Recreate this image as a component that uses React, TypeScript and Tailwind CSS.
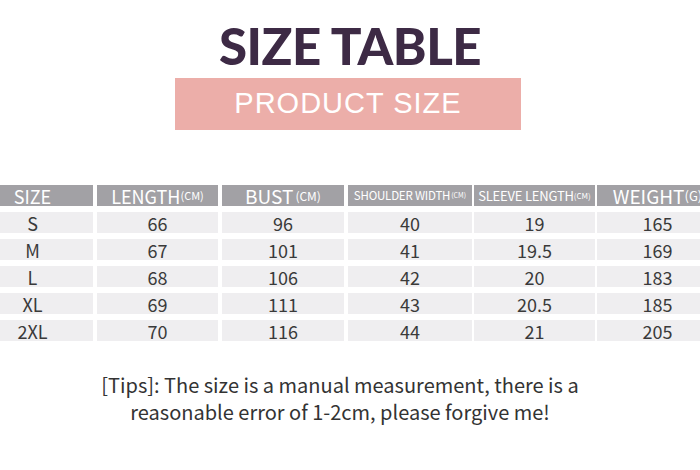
import React from "react";

const cols = [
  { w: "w-[121px]", ml: "ml-0" },
  { w: "w-[121px]", ml: "ml-[4px]" },
  { w: "w-[122px]", ml: "ml-[4px]" },
  { w: "w-[124px]", ml: "ml-[4px]" },
  { w: "w-[121px]", ml: "ml-[2px]" },
  { w: "w-[121px]", ml: "ml-[2px]" },
];

const rows = [
  ["S", "66", "96", "40", "19", "165"],
  ["M", "67", "101", "41", "19.5", "169"],
  ["L", "68", "106", "42", "20", "183"],
  ["XL", "69", "111", "43", "20.5", "185"],
  ["2XL", "70", "116", "44", "21", "205"],
];

const font = "font-['Noto_Sans_CJK_SC','Noto_Sans',sans-serif]";

export default function App() {
  return (
    <div className="w-[700px] h-[470px] bg-white overflow-hidden flex flex-col items-center">
      <h1 className="mt-[17px] h-[58px] leading-[58px] text-[51px] font-black text-[#3d2a45] tracking-[-0.5px] font-['Lato',sans-serif]">
        SIZE TABLE
      </h1>
      <div className="mt-[3px] mr-[4px] w-[346px] h-[52px] bg-[#ecaea9] flex items-center justify-center">
        <span className="text-white text-[29px] tracking-[1px] font-['Liberation_Sans',Arial,sans-serif]">
          PRODUCT SIZE
        </span>
      </div>

      <div className={`mt-[55px] self-start ml-[-28px] flex flex-col gap-[6px] ${font}`}>
        <div className="flex h-[21px]">
          <div className={`${cols[0].w} ${cols[0].ml} bg-[#a2a1a5] flex items-center justify-center text-white`}>
            <span className="text-[18px] leading-none">SIZE</span>
          </div>
          <div className={`${cols[1].w} ${cols[1].ml} bg-[#a2a1a5] flex items-center justify-center text-white`}>
            <span className="text-[18px] leading-none">LENGTH</span>
            <span className="text-[11px] leading-none">(CM)</span>
          </div>
          <div className={`${cols[2].w} ${cols[2].ml} bg-[#a2a1a5] flex items-center justify-center text-white`}>
            <span className="text-[19px] leading-none">BUST</span>
            <span className="text-[12px] leading-none ml-[2px]">(CM)</span>
          </div>
          <div className={`${cols[3].w} ${cols[3].ml} bg-[#a2a1a5] flex items-center justify-center text-white`}>
            <span className="text-[11.5px] leading-none tracking-[-0.2px]">SHOULDER WIDTH</span>
            <span className="text-[7px] leading-none ml-[1px]">(CM)</span>
          </div>
          <div className={`${cols[4].w} ${cols[4].ml} bg-[#a2a1a5] flex items-center justify-center text-white`}>
            <span className="text-[13px] leading-none tracking-[-0.2px]">SLEEVE LENGTH</span>
            <span className="text-[8px] leading-none">(CM)</span>
          </div>
          <div className={`${cols[5].w} ${cols[5].ml} bg-[#a2a1a5] flex items-center justify-center text-white`}>
            <span className="text-[19px] leading-none">WEIGHT</span>
            <span className="text-[13px] leading-none">(G)</span>
          </div>
        </div>
        {rows.map((r) => (
          <div key={r[0]} className="flex h-[21px]">
            {r.map((v, i) => (
              <div
                key={i}
                className={`${cols[i].w} ${cols[i].ml} bg-[#efeef0] flex items-center justify-center text-[18px] leading-none text-[#3a3a3a]`}
              >
                {v}
              </div>
            ))}
          </div>
        ))}
      </div>

      <p className={`mt-[30px] mr-[20px] w-[520px] text-center text-[20px] leading-[27px] text-[#333] ${font}`}>
        [Tips]: The size is a manual measurement, there is a reasonable error of 1-2cm, please forgive me!
      </p>
    </div>
  );
}
